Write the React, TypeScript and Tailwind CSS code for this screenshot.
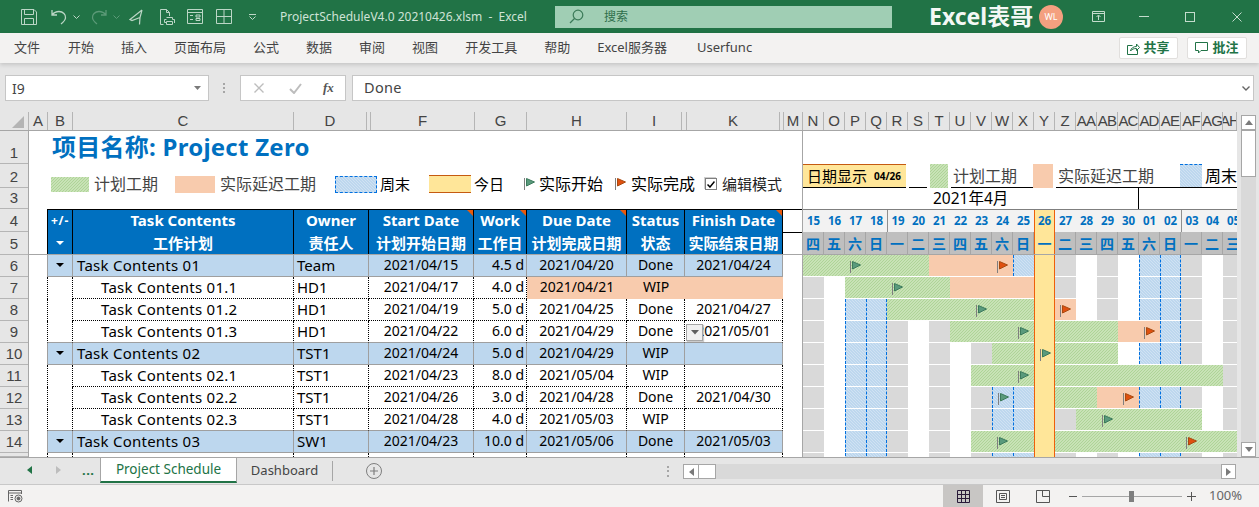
import React from "react";

const GREEN = "bg-[repeating-linear-gradient(135deg,#c8e2b6_0,#c8e2b6_1.4px,#aed497_1.4px,#aed497_2.12px)]";
const BLUE = "bg-[repeating-linear-gradient(45deg,#bdd7ee_0,#bdd7ee_1.4px,#d0e2f3_1.4px,#d0e2f3_2.12px)]";

const cellKind: Record<string, string> = {
  w: "h-[21px] bg-white",
  x: "h-[21px] bg-[#d9d9d9]",
  g: `h-[21px] ${GREEN}`,
  o: "h-[21px] bg-[#f8cbad]",
  b: `h-[21px] ${BLUE} border-l border-dashed border-[#0070e0]`,
  B: `h-[21px] ${BLUE} border-x border-dashed border-[#0070e0]`,
  t: "h-[22px] bg-[#ffe699] border-x border-[#ee5f0a]",
};

type Row = {
  n: number;
  name: string;
  owner: string;
  start: string;
  work: string;
  due: string;
  status: string;
  finish: string;
  group?: boolean;
  last?: boolean;
  late?: boolean;
  cells: string;
  s?: number;
  e?: number;
};

const rows: Row[] = [
  { n: 6, name: "Task Contents 01", owner: "Team", start: "2021/04/15", work: "4.5 d", due: "2021/04/20", status: "Done", finish: "2021/04/24", group: true, cells: "ggggggoooobtxwxwbBxwx", s: 2, e: 9 },
  { n: 7, name: "Task Contents 01.1", owner: "HD1", start: "2021/04/17", work: "4.0 d", due: "2021/04/21", status: "WIP", finish: "", late: true, cells: "xwgggggoooot" + "xwxwbBxwx", s: 4 },
  { n: 8, name: "Task Contents 01.2", owner: "HD1", start: "2021/04/19", work: "5.0 d", due: "2021/04/25", status: "Done", finish: "2021/04/27", cells: "xwbBgggggggt" + "owxwbBxwx", s: 8, e: 12 },
  { n: 9, name: "Task Contents 01.3", owner: "HD1", start: "2021/04/22", work: "6.0 d", due: "2021/04/29", status: "Done", finish: "2021/05/01", last: true, cells: "xwbBxwxggggt" + "gggooBxwx", s: 10, e: 16 },
  { n: 10, name: "Task Contents 02", owner: "TST1", start: "2021/04/24", work: "5.0 d", due: "2021/04/29", status: "WIP", finish: "", group: true, cells: "xwbBxwxwxggt" + "gggwbBxwx", s: 11 },
  { n: 11, name: "Task Contents 02.1", owner: "TST1", start: "2021/04/23", work: "8.0 d", due: "2021/05/04", status: "WIP", finish: "", cells: "xwbBxwxwgggt" + "ggggggggx", s: 10 },
  { n: 12, name: "Task Contents 02.2", owner: "TST1", start: "2021/04/26", work: "3.0 d", due: "2021/04/28", status: "Done", finish: "2021/04/30", cells: "xwbBxwxwxbbt" + "ggoobBxwx", s: 9, e: 15 },
  { n: 13, name: "Task Contents 02.3", owner: "TST1", start: "2021/04/28", work: "4.0 d", due: "2021/05/03", status: "WIP", finish: "", last: true, cells: "xwbBxwxwxbbt" + "xggggggwx", s: 14 },
  { n: 14, name: "Task Contents 03", owner: "SW1", start: "2021/04/23", work: "10.0 d", due: "2021/05/06", status: "Done", finish: "2021/05/03", group: true, cells: "xwbBxwxwgggt" + "ggggggggg", s: 9, e: 18 },
  { n: 15, name: "", owner: "", start: "", work: "", due: "", status: "", finish: "", cells: "xwbBxwxwxbbt" + "xwxwbBxwx" },
];

const dates = ["15", "16", "17", "18", "19", "20", "21", "22", "23", "24", "25", "26", "27", "28", "29", "30", "01", "02", "03", "04", "05"];
const weekdays = ["四", "五", "六", "日", "一", "二", "三", "四", "五", "六", "日", "一", "二", "三", "四", "五", "六", "日", "一", "二", "三"];

function Flag({ color, dark }: { color: string; dark: string }) {
  return (
    <svg width="13" height="14" viewBox="0 0 13 14" className="block">
      <line x1="0.5" y1="1" x2="0.5" y2="13" stroke="#7f7f7f" />
      <path d="M2.5 1.5 L10.5 5 L2.5 9 Z" fill={color} stroke={dark} strokeWidth="1" />
    </svg>
  );
}

const startFlag = <Flag color="#5a9a7c" dark="#3c7a5c" />;
const endFlag = <Flag color="#e0500f" dark="#a84a10" />;

function GanttRow({ r }: { r: Row }) {
  return (
    <div className="flex h-[22px] w-[441px] shrink-0 items-start bg-white">
      {r.cells.split("").map((k, i) => (
        <div key={i} className={`w-[21px] shrink-0 pl-[5px] pt-[5px] ${cellKind[k]}`}>
          {r.s === i ? startFlag : r.e === i ? endFlag : null}
        </div>
      ))}
    </div>
  );
}

function DataRow({ r }: { r: Row }) {
  const base = r.group
    ? "bg-[#bdd7ee] border-b border-r border-[#9f9f9f]"
    : r.last
      ? "border-r border-dotted border-black border-b border-b-[#9f9f9f] [border-bottom-style:solid]"
      : "border-b border-r border-dotted border-black";
  const lateCell = "bg-[#f8cbad]";
  const tail = r.late ? lateCell : base;
  const bCell = r.group
    ? "bg-[#bdd7ee] border-y-0 border-b border-l border-r border-[#9f9f9f]"
    : r.last
      ? "border-x border-dotted border-black border-b border-b-[#9f9f9f] [border-bottom-style:solid]"
      : "border-x border-dotted border-black";
  return (
    <div className="flex h-[22px] text-[14px] leading-[20px] text-black">
      <div className="w-[18px] shrink-0" />
      <div className={`flex w-[26px] shrink-0 items-center justify-center pb-[2px] ${bCell}`}>
        {r.group && (
          <svg width="8" height="4" viewBox="0 0 8 4" className="block">
            <path d="M0 0H8L4 4Z" fill="#000" />
          </svg>
        )}
      </div>
      <div className={`w-[221px] shrink-0 whitespace-pre text-[15px] tracking-[0.25px] ${base} ${r.group ? "pl-[4px]" : "pl-[28px]"}`}>{r.name}</div>
      <div className={`w-[75px] shrink-0 pl-[3px] text-[15px] ${base}`}>{r.owner}</div>
      <div className={`w-[105px] shrink-0 text-center ${base}`}>{r.start}</div>
      <div className={`w-[53px] shrink-0 pr-[2px] text-right ${base}`}>{r.work}</div>
      <div className={`w-[100px] shrink-0 text-center ${tail}`}>{r.due}</div>
      <div className={`w-[58px] shrink-0 text-center ${tail}`}>{r.status}</div>
      <div className={`relative w-[98px] shrink-0 text-center ${tail}`}>
        {r.finish}
        {r.n === 9 && (
          <div className="absolute left-[1px] top-[3px] flex h-[17px] w-[17px] items-center justify-center border border-[#a6a6a6] bg-[#f0f0f0] shadow-[1px_1px_1px_rgba(0,0,0,0.2)]">
            <svg width="8" height="5" viewBox="0 0 8 5">
              <path d="M0 0H8L4 4.5Z" fill="#5f5f5f" />
            </svg>
          </div>
        )}
      </div>
      <div className="w-[19px] shrink-0" />
      <div className="w-[435px] shrink-0 overflow-hidden border-l border-[#a6a6a6]">
        <GanttRow r={r} />
      </div>
    </div>
  );
}

function HeadCell({ w, top, bottom, mark }: { w: string; top: string; bottom: React.ReactNode; mark?: boolean }) {
  return (
    <div className={`relative flex shrink-0 flex-col items-center border-r border-black bg-[#0070c0] text-[15px] font-bold text-white ${w}`}>
      <div className="flex h-[22px] items-center whitespace-nowrap pb-[2px]">{top}</div>
      <div className="flex h-[22px] items-center whitespace-nowrap">{bottom}</div>
      {mark && <div className="absolute right-0 top-0 h-0 w-0 border-l-[6px] border-t-[6px] border-l-transparent border-t-[#e8590c]" />}
    </div>
  );
}

const colHeads: [string, string][] = [
  ["A", "w-[19px]"],
  ["B", "w-[25px]"],
  ["C", "w-[221px]"],
  ["D", "w-[73px]"],
  ["", "w-[4px]"],
  ["F", "w-[104px]"],
  ["G", "w-[52px]"],
  ["H", "w-[100px]"],
  ["I", "w-[55px]"],
  ["", "w-[5px]"],
  ["K", "w-[93px]"],
  ["", "w-[4px]"],
  ["M", "w-[19px]"],
  ["N", "w-[21px]"], ["O", "w-[21px]"], ["P", "w-[21px]"], ["Q", "w-[21px]"], ["R", "w-[21px]"], ["S", "w-[21px]"], ["T", "w-[21px]"],
  ["U", "w-[21px]"], ["V", "w-[21px]"], ["W", "w-[21px]"], ["X", "w-[21px]"], ["Y", "w-[21px]"], ["Z", "w-[21px]"], ["AA", "w-[21px]"],
  ["AB", "w-[21px]"], ["AC", "w-[21px]"], ["AD", "w-[21px]"], ["AE", "w-[21px]"], ["AF", "w-[21px]"], ["AG", "w-[21px]"], ["AH", "w-[14px]"],
];

const rowHeads: [string, string][] = [
  ["1", "h-[33px]"], ["2", "h-[24px]"], ["3", "h-[21px]"], ["4", "h-[23px]"], ["5", "h-[23px]"],
  ["6", "h-[22px]"], ["7", "h-[22px]"], ["8", "h-[22px]"], ["9", "h-[22px]"], ["10", "h-[22px]"],
  ["11", "h-[22px]"], ["12", "h-[22px]"], ["13", "h-[22px]"], ["14", "h-[22px]"], ["", "h-[4px]"],
];

function TitleIcons() {
  const c = "#bcd6c6";
  return (
    <div className="flex items-center pl-[21px]">
      <svg width="16" height="16" viewBox="0 0 16 16" fill="none" stroke={c} className="block">
        <path d="M.5.5H13L15.5 3V15.5H.5Z" />
        <path d="M3.5.5V5.5H12.5V.5M3.5 15.5V9.5H12.5V15.5" />
      </svg>
      <svg width="16" height="16" viewBox="0 0 16 16" fill="none" stroke={c} strokeWidth="1.3" className="ml-[14px] block">
        <path d="M1 1V6H6M1 6C3 3.5 5.5 2.5 8 2.5C12 2.5 15 5.5 14.5 9C14.2 11 12.5 13 10 15" />
      </svg>
      <svg width="7" height="4" viewBox="0 0 7 4" fill="none" stroke={c} className="ml-[6px] block">
        <path d="M.5.5 3.5 3.5 6.5.5" />
      </svg>
      <svg width="16" height="16" viewBox="0 0 16 16" fill="none" stroke="#5c9a78" strokeWidth="1.3" className="ml-[11px] block">
        <path d="M15 1V6H10M15 6C13 3.5 10.5 2.5 8 2.5C4 2.5 1 5.5 1.5 9C1.8 11 3.5 13 6 15" />
      </svg>
      <svg width="7" height="4" viewBox="0 0 7 4" fill="none" stroke="#5c9a78" className="ml-[6px] block">
        <path d="M.5.5 3.5 3.5 6.5.5" />
      </svg>
      <svg width="14" height="16" viewBox="0 0 14 16" fill="none" stroke={c} strokeWidth="1.2" className="ml-[9px] block">
        <path d="M13 1 1 10.5 3 11.5 11 8.5M13 1 11 8.5 10.5 15.5" />
      </svg>
      <svg width="15" height="16" viewBox="0 0 15 16" fill="none" stroke={c} className="ml-[17px] block">
        <path d="M3.5 15.5H.5V.5H6.5L9.5 3.5V7M6.5.5V3.5H9.5" />
        <path d="M6.5 8.5H12.5V10.5H14.5V14M4.5 10.5H6.5M4.5 10.5V13.5H6.5M6.5 12.5H12.5V15.5H6.5Z" />
      </svg>
      <svg width="16" height="15" viewBox="0 0 16 15" fill="none" stroke={c} className="ml-[12px] block">
        <path d="M.5.5H15.5V14.5H.5ZM.5 3.5H15.5M3 6.5H6M9 6H13V8H9ZM3 10.5H6M9 9.5H13V11.5H9Z" />
      </svg>
      <svg width="16" height="15" viewBox="0 0 16 15" fill="none" stroke={c} className="ml-[13px] block">
        <path d="M.5.5H15.5V14.5H.5ZM8 .5V14.5M.5 7.5H15.5" />
      </svg>
      <svg width="7" height="6" viewBox="0 0 7 6" fill="none" stroke={c} className="ml-[17px] block">
        <path d="M0 .5H7M.5 2.5 3.5 5.5 6.5 2.5" />
      </svg>
    </div>
  );
}

function TitleBar() {
  return (
    <div className="flex h-[33px] shrink-0 items-center bg-[#217346] text-[12px] text-[#cfe3d6]">
      <div className="w-[280px] shrink-0">
        <TitleIcons />
      </div>
      <div className="w-[275px] shrink-0 whitespace-pre">ProjectScheduleV4.0 20210426.xlsm  -  Excel</div>
      <div className="flex h-[22px] w-[337px] shrink-0 items-center bg-[#a0ceb4] pl-[14px] text-[#2f6f4c]">
        <svg width="15" height="15" viewBox="0 0 15 15" fill="none" stroke="#3b7a58" strokeWidth="1.2" className="block">
          <circle cx="9" cy="6" r="4.8" />
          <path d="M5.5 9.5 1 14" />
        </svg>
        <span className="ml-[20px]">搜索</span>
      </div>
      <div className="ml-[37px] w-[110px] shrink-0 whitespace-nowrap text-[23px] font-bold leading-none text-[#f4f8f5]">Excel表哥</div>
      <div className="flex h-[24px] w-[24px] shrink-0 items-center justify-center rounded-full bg-[#f4a080] text-[9px] text-white">WL</div>
      <svg width="13" height="11" viewBox="0 0 13 11" fill="none" stroke="#c4dccd" className="ml-[29px] block">
        <path d="M.5.5H12.5V10.5H.5ZM.5 2.5H12.5M6.5 9V4.5M4.5 6 6.5 4 8.5 6" />
      </svg>
      <div className="ml-[34px] h-px w-[10px] bg-[#c4dccd]" />
      <div className="ml-[36px] h-[10px] w-[10px] border border-[#c4dccd]" />
      <svg width="10" height="10" viewBox="0 0 10 10" stroke="#c4dccd" className="ml-[37px] block">
        <path d="M.5.5 9.5 9.5M9.5.5 .5 9.5" />
      </svg>
    </div>
  );
}

function Ribbon() {
  return (
    <div className="relative z-10 flex h-[30px] shrink-0 items-center bg-[#f3f2f1] pl-[14px] text-[13px] text-[#444] shadow-[0_2px_4px_rgba(0,0,0,0.14)]">
      <div className="flex gap-[27px]">
        <span className="mr-[1px] whitespace-nowrap">文件</span>
        <span className="whitespace-nowrap">开始</span>
        <span className="whitespace-nowrap">插入</span>
        <span className="whitespace-nowrap">页面布局</span>
        <span className="whitespace-nowrap">公式</span>
        <span className="whitespace-nowrap">数据</span>
        <span className="whitespace-nowrap">审阅</span>
        <span className="whitespace-nowrap">视图</span>
        <span className="whitespace-nowrap">开发工具</span>
        <span className="whitespace-nowrap">帮助</span>
        <span className="whitespace-nowrap">Excel服务器</span>
        <span className="ml-[3px] whitespace-nowrap">Userfunc</span>
      </div>
      <div className="ml-auto flex items-center gap-[9px] pr-[12px] text-[13px] font-bold text-[#217346]">
        <div className="flex h-[22px] w-[59px] items-center justify-center gap-[3px] rounded-[2px] border border-[#e1dfdd] bg-white">
          <svg width="13" height="13" viewBox="0 0 13 13" fill="none" stroke="#217346" className="block">
            <path d="M5.5 3.5H.5V12.5H10.5V8M3.5 9C4 6 6.5 4.5 9.5 4.5V2L12.5 5.5 9.5 8.5V6.5C7 6.5 5 7 3.5 9Z" />
          </svg>
          共享
        </div>
        <div className="flex h-[22px] w-[60px] items-center justify-center gap-[4px] rounded-[2px] border border-[#e1dfdd] bg-white">
          <svg width="13" height="12" viewBox="0 0 13 12" fill="none" stroke="#217346" className="block">
            <path d="M.5.5H12.5V8.5H6L3.5 11V8.5H.5Z" />
          </svg>
          批注
        </div>
      </div>
    </div>
  );
}

function FormulaBar() {
  return (
    <div className="flex h-[49px] shrink-0 items-start bg-[#e6e6e6] pl-[5px] pt-[12px] text-[14px] text-[#444]">
      <div className="flex h-[26px] w-[204px] shrink-0 items-center justify-between border border-[#c6c6c6] bg-white pl-[6px] pr-[7px]">
        I9
        <svg width="7" height="4" viewBox="0 0 7 4" className="block">
          <path d="M0 0H7L3.5 4Z" fill="#7a7a7a" />
        </svg>
      </div>
      <div className="ml-[14px] mt-[8px] flex h-[10px] w-[2px] shrink-0 flex-col justify-between">
        <div className="h-[2px] bg-[#a6a6a6]" />
        <div className="h-[2px] bg-[#a6a6a6]" />
        <div className="h-[2px] bg-[#a6a6a6]" />
      </div>
      <div className="ml-[15px] flex h-[26px] w-[106px] shrink-0 items-center border border-[#c6c6c6] bg-white pl-[13px]">
        <svg width="10" height="10" viewBox="0 0 10 10" stroke="#bdbdbd" strokeWidth="1.4" className="block">
          <path d="M.5.5 9.5 9.5M9.5.5 .5 9.5" />
        </svg>
        <svg width="13" height="11" viewBox="0 0 13 11" fill="none" stroke="#bdbdbd" strokeWidth="2" className="ml-[25px] block">
          <path d="M1 6 5 10 12 1" />
        </svg>
        <span className="ml-[21px] font-['Liberation_Serif',serif] text-[13px] font-bold italic text-[#555]">fx</span>
      </div>
      <div className="ml-[6px] flex h-[26px] w-[902px] shrink-0 items-center justify-between border border-[#c6c6c6] bg-white pl-[11px] pr-[3px] text-[14.5px] tracking-[0.3px]">
        Done
        <svg width="8" height="5" viewBox="0 0 8 5" fill="none" stroke="#666" strokeWidth="1.4" className="block">
          <path d="M.5.5 4 4 7.5.5" />
        </svg>
      </div>
    </div>
  );
}

function Legend() {
  const lText = "text-[16px] leading-none text-[#444]";
  return (
    <div className="flex h-[45px] items-center pl-[22px] pb-[5px]">
      <div className={`h-[15px] w-[38px] shrink-0 ${GREEN}`} />
      <span className={`ml-[5px] w-[63px] shrink-0 whitespace-nowrap ${lText}`}>计划工期</span>
      <div className="ml-[18px] h-[17px] w-[40px] shrink-0 bg-[#f8cbad]" />
      <span className={`ml-[5px] w-[95px] shrink-0 whitespace-nowrap ${lText}`}>实际延迟工期</span>
      <div className={`ml-[20px] h-[17px] w-[42px] shrink-0 border border-dashed border-[#0070e0] ${BLUE}`} />
      <span className="ml-[3px] w-[30px] shrink-0 whitespace-nowrap text-[15px] leading-none text-black">周末</span>
      <div className="ml-[19px] h-[18px] w-[42px] shrink-0 border-y border-[#c55a11] bg-[#ffe699]" />
      <span className="ml-[3px] w-[34px] shrink-0 whitespace-nowrap text-[15px] leading-none text-black">今日</span>
      <div className="ml-[16px] w-[15px] shrink-0">{startFlag}</div>
      <span className="w-[64px] shrink-0 whitespace-nowrap text-[16px] leading-none text-black">实际开始</span>
      <div className="ml-[12px] w-[16px] shrink-0">{endFlag}</div>
      <span className="w-[64px] shrink-0 whitespace-nowrap text-[16px] leading-none text-black">实际完成</span>
      <div className="ml-[10px] flex h-[12px] w-[12px] shrink-0 items-center justify-center border border-[#7f7f7f] bg-white shadow-[-1px_-1px_0_#cfcfcf]">
        <svg width="8" height="7" viewBox="0 0 8 7" fill="none" stroke="#000" strokeWidth="1.5" className="block">
          <path d="M.5 3.5 3 6 7.5.5" />
        </svg>
      </div>
      <span className="ml-[5px] w-[62px] shrink-0 whitespace-nowrap text-[15px] leading-none text-[#222]">编辑模式</span>
    </div>
  );
}

function GanttHead() {
  return (
    <div className="h-[78px] w-[434px] shrink-0 overflow-hidden">
      <div className="h-[33px]" />
      <div className="flex h-[24px] items-stretch text-[16px] leading-none text-[#444]">
        <div className="flex w-[103px] shrink-0 items-center border-y border-b-black border-t-[#c55a11] bg-[#ffe699] pl-[4px] text-[15px] text-black">
          日期显示
          <span className="ml-[7px] text-[10px] font-bold">04/26</span>
        </div>
        <div className="ml-[3px] w-[18px] shrink-0 border-b border-black" />
        <div className={`ml-[3px] w-[18px] shrink-0 ${GREEN}`} />
        <div className="ml-[3px] flex w-[82px] shrink-0 items-center border-b border-black pl-[2px] whitespace-nowrap">计划工期</div>
        <div className="w-[20px] shrink-0 bg-[#f8cbad]" />
        <div className="ml-[3px] flex w-[181px] shrink-0 items-center border-b border-black pl-[2px] whitespace-nowrap">
          实际延迟工期
          <div className={`ml-[26px] h-[23px] w-[22px] shrink-0 self-start border-t border-dashed border-[#0070e0] ${BLUE}`} />
          <span className="ml-[3px] text-black">周末</span>
        </div>
      </div>
      <div className="flex h-[21px]">
        <div className="flex w-[336px] shrink-0 items-center border-r border-black pl-[130px] text-[15.5px] leading-none text-black">2021年4月</div>
      </div>
    </div>
  );
}

function TableHead() {
  return (
    <div className="flex h-[46px] border-b border-[#a6a6a6]">
      <div className="w-[18px] shrink-0" />
      <div className="flex h-[45px] border-t border-black">
        <div className="flex w-[26px] shrink-0 flex-col items-center border-x border-black bg-[#0070c0] text-[12px] font-bold tracking-[0.8px] text-white">
          <div className="flex h-[22px] items-center">+/-</div>
          <div className="flex h-[22px] items-center">
            <svg width="8" height="4" viewBox="0 0 8 4" className="block">
              <path d="M0 0H8L4 4Z" fill="#fff" />
            </svg>
          </div>
        </div>
        <HeadCell w="w-[221px]" top="Task Contents" bottom="工作计划" />
        <HeadCell w="w-[75px]" top="Owner" bottom="责任人" />
        <HeadCell w="w-[105px]" top="Start Date" bottom="计划开始日期" mark />
        <HeadCell w="w-[53px]" top="Work" bottom="工作日" mark />
        <HeadCell w="w-[100px]" top="Due Date" bottom="计划完成日期" mark />
        <HeadCell w="w-[58px]" top="Status" bottom="状态" />
        <HeadCell w="w-[98px]" top="Finish Date" bottom="实际结束日期" mark />
        <div className="h-[23px] w-[19px] shrink-0 border-b border-black" />
      </div>
      <div className="h-[45px] w-[435px] shrink-0 overflow-hidden border-l border-[#a6a6a6]">
        <div className="flex h-[23px] w-[441px] border-t border-[#7f7f7f] bg-[#f2f2f2] text-[11.5px] font-bold text-[#0070c0]">
          {dates.map((d, i) => (
            <div
              key={i}
              className={`flex w-[21px] shrink-0 items-center justify-center ${i === 11 ? "border-x border-[#ee5f0a] bg-[#ffe699]" : i === 4 || i === 18 ? "border-l border-[#8f8f8f]" : ""}`}
            >
              {d}
            </div>
          ))}
        </div>
        <div className="flex h-[22px] w-[441px] bg-[#bfbfbf] text-[14px] font-bold text-[#0070c0]">
          {weekdays.map((d, i) => (
            <div
              key={i}
              className={`flex w-[21px] shrink-0 items-center justify-center ${i === 11 ? "border-x border-[#ee5f0a] bg-[#ffe699]" : "border-r border-[#a6a6a6]"}`}
            >
              {d}
            </div>
          ))}
        </div>
      </div>
    </div>
  );
}

function Sheet() {
  return (
    <div className="flex h-[345px] shrink-0">
      <div className="w-[1237px] shrink-0 overflow-hidden">
        <div className="flex h-[19px] border-b border-[#a6a6a6] bg-[#e6e6e6] font-['Liberation_Sans',sans-serif] text-[15px] leading-[18px] text-[#444]">
          <div className="flex w-[29px] shrink-0 items-end justify-end border-r border-[#b5b5b5] pb-[2px] pr-[4px]">
            <div className="h-0 w-0 border-b-[12px] border-l-[12px] border-b-[#b4b4b4] border-l-transparent" />
          </div>
          {colHeads.map(([l, w], i) => (
            <div key={i} className={`flex shrink-0 justify-center overflow-hidden whitespace-nowrap border-r border-[#b5b5b5] ${w} ${l.length > 1 ? "tracking-[-0.8px]" : ""}`}>
              {l}
            </div>
          ))}
        </div>
        <div className="flex h-[326px] overflow-hidden">
          <div className="w-[29px] shrink-0 border-r border-[#a6a6a6] bg-[#e6e6e6] font-['Liberation_Sans',sans-serif] text-[15px] text-[#444]">
            {rowHeads.map(([l, h], i) => (
              <div key={i} className={`flex items-end justify-center border-b border-[#b5b5b5] pb-[1px] leading-[18px] ${h}`}>
                {l}
              </div>
            ))}
          </div>
          <div className="w-[1208px] shrink-0 overflow-hidden bg-white">
            <div className="flex h-[78px]">
              <div className="w-[773px] shrink-0">
                <div className="h-[33px] pl-[23px] text-[24px] font-bold leading-[32px] tracking-[0.25px] text-[#0070c0]">项目名称: Project Zero</div>
                <Legend />
              </div>
              <div className="border-l border-[#a6a6a6]">
                <GanttHead />
              </div>
            </div>
            <TableHead />
            {rows.map((r) => (
              <DataRow key={r.n} r={r} />
            ))}
          </div>
        </div>
      </div>
      <div className="flex w-[22px] shrink-0 flex-col bg-[#e6e6e6] pl-[4px] pr-[3px] pt-[3px]">
        <div className="flex h-[15px] w-[15px] items-center justify-center border border-[#a6a6a6] bg-white">
          <svg width="8" height="5" viewBox="0 0 8 5"><path d="M4 0 8 5H0Z" fill="#7a7a7a" /></svg>
        </div>
        <div className="flex flex-1 flex-col bg-[#d9d9d9]">
          <div className="h-[47px] border border-[#a6a6a6] bg-white" />
          <div className="flex-1" />
          <div className="flex h-[15px] items-center justify-center border border-[#a6a6a6] bg-white">
            <svg width="8" height="5" viewBox="0 0 8 5"><path d="M0 0H8L4 5Z" fill="#7a7a7a" /></svg>
          </div>
        </div>
      </div>
    </div>
  );
}

function Tabs() {
  return (
    <div className="flex h-[28px] shrink-0 border-y border-[#a6a6a6] border-b-[#c8c8c8] bg-[#e6e6e6] text-[13px]">
      <div className="flex w-[100px] shrink-0 items-center pb-[2px]">
        <svg width="5" height="8" viewBox="0 0 5 8" className="ml-[27px] block"><path d="M5 0V8L0 4Z" fill="#217346" /></svg>
        <svg width="5" height="8" viewBox="0 0 5 8" className="ml-[24px] block"><path d="M0 0V8L5 4Z" fill="#bdbdbd" /></svg>
        <span className="ml-[21px] text-[13px] font-bold leading-none tracking-[0.5px] text-[#217346]">...</span>
      </div>
      <div className="flex h-[25px] w-[137px] shrink-0 items-center justify-center border-x border-b-2 border-[#a6a6a6] border-b-[#217346] bg-white pb-[1px] text-[13.5px] text-[#217346]">Project Schedule</div>
      <div className="flex h-[20px] w-[96px] shrink-0 items-center justify-center self-center border-r border-[#a6a6a6] text-[#444]">Dashboard</div>
      <div className="ml-[33px] flex h-[16px] w-[16px] shrink-0 items-center justify-center self-center rounded-full border border-[#7f7f7f] text-[14px] leading-none text-[#7f7f7f]">
        <svg width="8" height="8" viewBox="0 0 8 8" stroke="#7f7f7f" strokeWidth="1.2"><path d="M4 0V8M0 4H8" /></svg>
      </div>
      <div className="ml-[285px] flex h-[11px] w-[2px] shrink-0 flex-col justify-between self-center">
        <div className="h-[2px] bg-[#a6a6a6]" />
        <div className="h-[2px] bg-[#a6a6a6]" />
        <div className="h-[2px] bg-[#a6a6a6]" />
      </div>
      <div className="ml-[14px] mt-[6px] flex h-[15px] w-[553px] shrink-0 bg-[#d9d9d9]">
        <div className="flex h-[15px] w-[16px] items-center justify-center border border-[#a6a6a6] bg-white">
          <svg width="5" height="8" viewBox="0 0 5 8"><path d="M5 0V8L0 4Z" fill="#7a7a7a" /></svg>
        </div>
        <div className="h-[15px] w-[17px] border-y border-r border-[#a6a6a6] bg-white" />
        <div className="flex-1" />
        <div className="flex h-[15px] w-[15px] items-center justify-center border border-[#a6a6a6] bg-white">
          <svg width="5" height="8" viewBox="0 0 5 8"><path d="M0 0V8L5 4Z" fill="#7a7a7a" /></svg>
        </div>
      </div>
    </div>
  );
}

function StatusBar() {
  return (
    <div className="flex h-[22px] shrink-0 items-center bg-[#f3f2f1] text-[#666]">
      <svg width="15" height="13" viewBox="0 0 15 13" fill="none" stroke="#666" className="ml-[8px] block">
        <path d="M.5 11.5V.5H13.5V4M.5 3H13.5M2.5 5.5H5M2.5 7.5H5M2.5 9.5H5" />
        <circle cx="10.5" cy="8.5" r="3.5" />
        <circle cx="10.5" cy="8.5" r="1.5" fill="#666" />
      </svg>
      <div className="ml-[920px] flex h-[22px] w-[40px] shrink-0 items-center justify-center bg-[#c8c6c4]">
        <svg width="13" height="13" viewBox="0 0 13 13" fill="none" stroke="#2a1a3a" className="block">
          <path d="M.5.5H12.5V12.5H.5ZM4.5.5V12.5M8.5.5V12.5M.5 4.5H12.5M.5 8.5H12.5" />
        </svg>
      </div>
      <div className="flex h-[22px] w-[40px] shrink-0 items-center justify-center">
        <svg width="14" height="13" viewBox="0 0 14 13" fill="none" stroke="#555" className="block">
          <path d="M.5.5H13.5V12.5H.5ZM3.5 3.5H10.5V9.5H3.5ZM5 5.5H9M5 7.5H9" />
        </svg>
      </div>
      <div className="flex h-[22px] w-[40px] shrink-0 items-center justify-center">
        <svg width="14" height="13" viewBox="0 0 14 13" fill="none" stroke="#555" className="block">
          <path d="M.5.5H13.5V12.5H.5ZM6.5.5V6.5H13.5" />
        </svg>
      </div>
      <div className="ml-[6px] h-px w-[8px] shrink-0 bg-[#555]" />
      <div className="relative ml-[5px] h-px w-[100px] shrink-0 bg-[#a6a6a6]">
        <div className="absolute left-[47px] top-[-5px] h-[11px] w-[5px] bg-[#7f7f7f]" />
      </div>
      <svg width="9" height="9" viewBox="0 0 9 9" stroke="#555" className="ml-[5px] block">
        <path d="M4.5 0V9M0 4.5H9" />
      </svg>
      <span className="ml-[13px] text-[13px]">100%</span>
    </div>
  );
}

export default function App() {
  return (
    <div className="flex h-[507px] w-[1259px] flex-col overflow-hidden bg-white font-['Noto_Sans','Noto_Sans_CJK_SC',sans-serif]">
      <TitleBar />
      <Ribbon />
      <FormulaBar />
      <Sheet />
      <Tabs />
      <StatusBar />
    </div>
  );
}
